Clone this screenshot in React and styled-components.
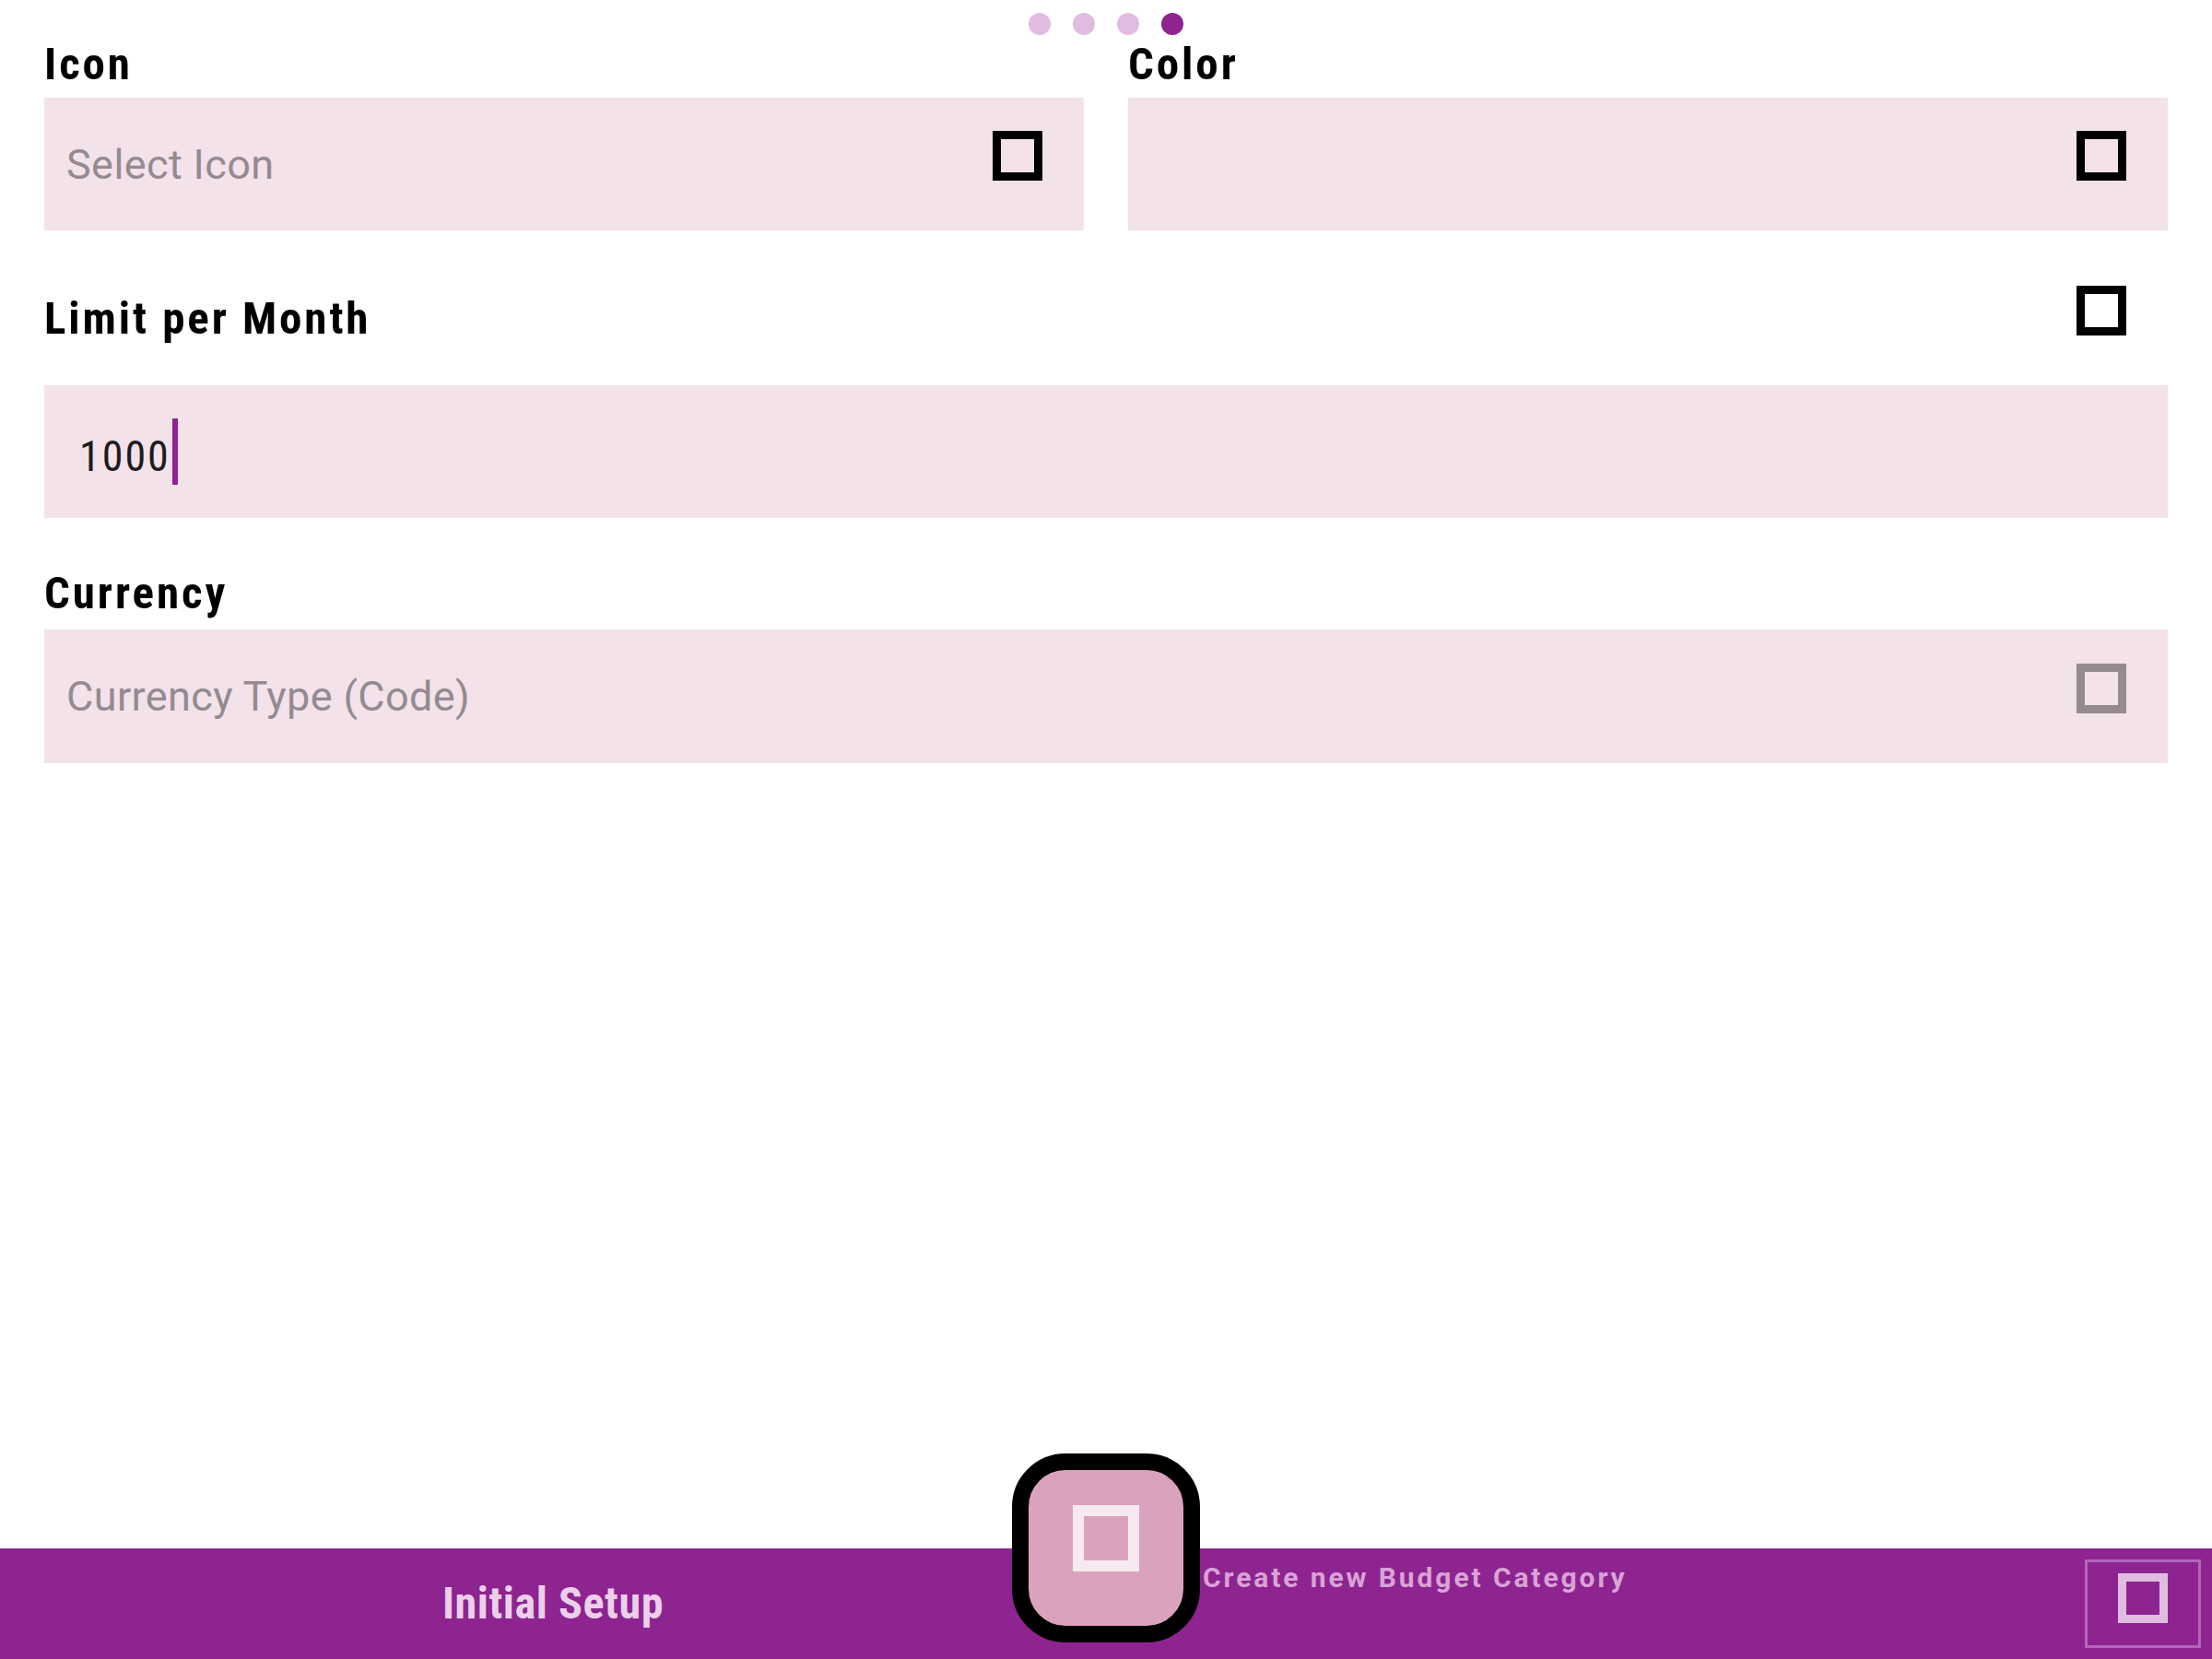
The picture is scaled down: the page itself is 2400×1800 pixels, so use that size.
import styled, { createGlobalStyle } from 'styled-components';

const GlobalStyle = createGlobalStyle`
  body {
    margin: 0;
    background: #ffffff;
    font-family: Roboto, "Noto Sans", sans-serif;
  }
`;

const Page = styled.div`
  display: flex;
  flex-direction: column;
  height: 100vh;
`;

const Content = styled.main`
  flex: 1;
  padding: 0 48px;
`;

const Dots = styled.div`
  display: flex;
  justify-content: center;
  gap: 24px;
  padding-top: 14px;
`;

const Dot = styled.span`
  width: 24px;
  height: 24px;
  border-radius: 50%;
  background: ${(p) => (p.$active ? '#8e2490' : '#e0bde0')};
`;

const TwoCol = styled.div`
  display: grid;
  grid-template-columns: 1fr 1fr;
  column-gap: 48px;
  margin-top: 4px;
`;

const Label = styled.h2`
  margin: ${(p) => p.$mt || 0}px 0 0;
  font-size: 49px;
  line-height: 56px;
  font-weight: 700;
  font-stretch: 87.5%;
  letter-spacing: 2.9px;
  color: #000;
`;

const Field = styled.div`
  box-sizing: border-box;
  display: flex;
  align-items: center;
  height: ${(p) => p.$h || 144}px;
  margin-top: ${(p) => p.$mt || 0}px;
  padding: 0 45px 0 ${(p) => p.$pl || 24}px;
  background: #f3e2ea;
`;

const Placeholder = styled.span`
  flex: 1;
  font-size: 45px;
  letter-spacing: 0.4px;
  color: #948a90;
`;

const Value = styled.span`
  display: flex;
  align-items: center;
  flex: 1;
  padding-top: 10px;
  font-size: 46px;
  font-stretch: 87.5%;
  letter-spacing: 2px;
  color: #1d1b1e;
`;

const Caret = styled.span`
  width: 6px;
  height: 72px;
  margin: -10px 0 0 2px;
  background: #8e2490;
`;

const Glyph = styled.span`
  box-sizing: border-box;
  flex: none;
  width: ${(p) => p.$size || 54}px;
  height: ${(p) => p.$size || 54}px;
  margin-bottom: ${(p) => p.$lift || 0}px;
  border: ${(p) => p.$stroke || 9}px solid ${(p) => p.$color || '#000'};
`;

const LimitRow = styled.div`
  display: flex;
  justify-content: space-between;
  align-items: flex-start;
  margin-top: 60px;
  padding-right: 45px;
  h2 {
    margin-top: 8px;
  }
`;

const BottomBar = styled.footer`
  position: relative;
  display: flex;
  align-items: center;
  height: 120px;
  background: #8e2490;
`;

const Title = styled.div`
  box-sizing: border-box;
  width: 1098px;
  padding: 0 0 2px 102px;
  text-align: center;
  font-size: 48px;
  font-weight: 700;
  font-stretch: 87.5%;
  letter-spacing: 0.6px;
  color: #ecd0ea;
`;

const FabSlot = styled.div`
  position: relative;
  align-self: stretch;
  width: 204px;
`;

const Fab = styled.button`
  position: absolute;
  top: -103px;
  left: 0;
  box-sizing: border-box;
  display: flex;
  align-items: center;
  justify-content: center;
  width: 204px;
  height: 205px;
  padding: 0;
  border: 18px solid #000;
  border-radius: 58px;
  background: #dba2bd;
`;

const Caption = styled.span`
  align-self: flex-start;
  margin: 14px 0 0 3px;
  font-size: 30px;
  line-height: 36px;
  font-weight: 700;
  letter-spacing: 2.9px;
  color: #d9a3d6;
`;

const Spacer = styled.div`
  flex: 1;
`;

const IconButton = styled.button`
  box-sizing: border-box;
  display: flex;
  align-items: center;
  justify-content: center;
  width: 126px;
  height: 96px;
  margin-right: 12px;
  padding: 0;
  border: 3px solid #b566b8;
  background: transparent;
`;

export default function App() {
  return (
    <Page>
      <GlobalStyle />
      <Content>
        <Dots>
          <Dot />
          <Dot />
          <Dot />
          <Dot $active />
        </Dots>
        <TwoCol>
          <div>
            <Label>Icon</Label>
            <Field $mt={8}>
              <Placeholder>Select Icon</Placeholder>
              <Glyph $lift={18} />
            </Field>
          </div>
          <div>
            <Label>Color</Label>
            <Field $mt={8}>
              <Placeholder />
              <Glyph $lift={18} />
            </Field>
          </div>
        </TwoCol>
        <LimitRow>
          <Label>Limit per Month</Label>
          <Glyph />
        </LimitRow>
        <Field $mt={44} $pl={38}>
          <Value>
            1000
            <Caret />
          </Value>
        </Field>
        <Label $mt={54}>Currency</Label>
        <Field $mt={11} $h={145}>
          <Placeholder>Currency Type (Code)</Placeholder>
          <Glyph $lift={18} $color="#948a90" />
        </Field>
      </Content>
      <BottomBar>
        <Title>Initial Setup</Title>
        <FabSlot>
          <Fab>
            <Glyph $size={72} $stroke={12} $lift={22} $color="#f7e9f0" />
          </Fab>
        </FabSlot>
        <Caption>Create new Budget Category</Caption>
        <Spacer />
        <IconButton>
          <Glyph $lift={12} $color="#e0bde0" />
        </IconButton>
      </BottomBar>
    </Page>
  );
}
